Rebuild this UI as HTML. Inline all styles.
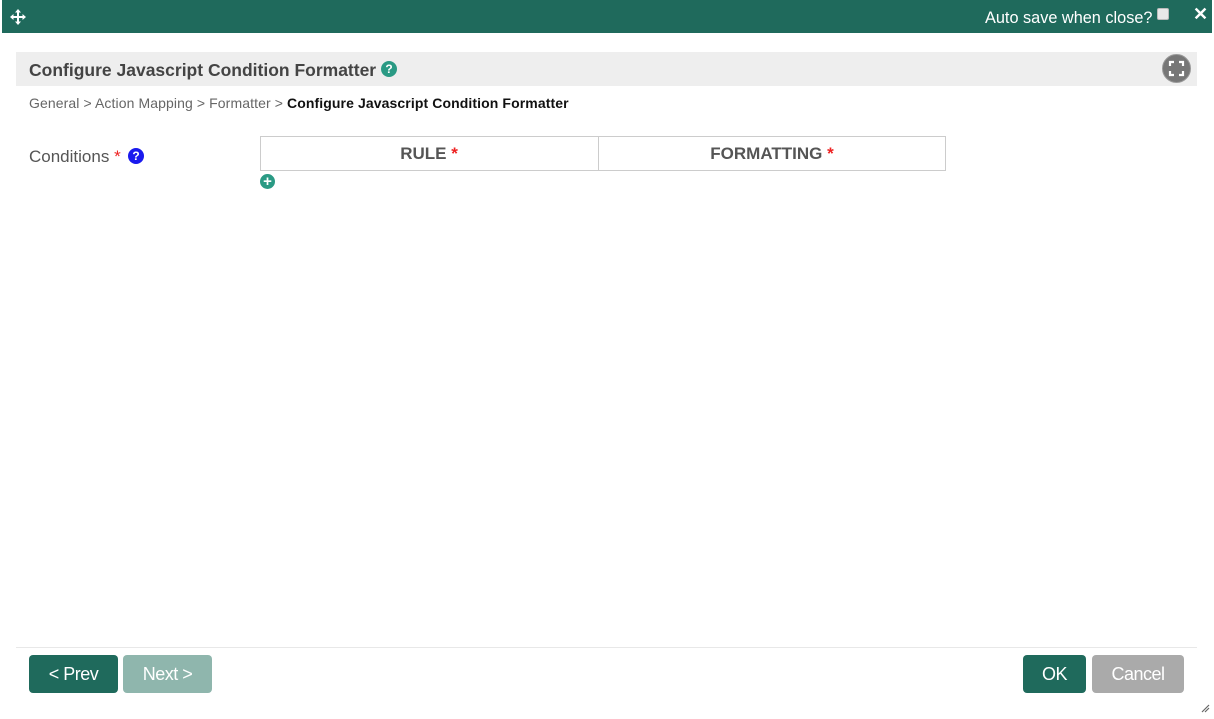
<!DOCTYPE html>
<html><head><meta charset="utf-8"><style>
*{box-sizing:border-box;margin:0;padding:0}
body{width:1214px;height:719px;background:#fff;font-family:"Liberation Sans",Arial,sans-serif;position:relative;overflow:hidden}
.top{position:absolute;left:2px;top:0;width:1210px;height:33px;background:#1f6a5c;color:#fff}
.abs{position:absolute}
.btn{position:absolute;top:655px;height:38px;border-radius:4px;color:#fff;font-size:18px;line-height:38px;text-align:center;letter-spacing:-0.5px}
</style></head><body>
<div class="top">
<svg class="abs" style="left:8px;top:9px" width="16" height="16" viewBox="0 0 16 16" fill="#fff"><path d="M8 0L11 3.5H9V7H12.5V5L16 8L12.5 11V9H9V12.5H11L8 16L5 12.5H7V9H3.5V11L0 8L3.5 5V7H7V3.5H5Z"/></svg>
<div class="abs" style="left:983px;top:9px;font-size:16.3px">Auto save when close?</div>
<div class="abs" style="left:1155px;top:8px;width:12px;height:12px;background:#e8e8e8;border:1px solid #bbb;border-radius:2px"></div>
<div class="abs" style="left:1191px;top:4px;font-size:18px;font-weight:bold">✕</div>
</div>
<div class="abs" style="left:16px;top:52px;width:1181px;height:34px;background:#eeeeee"></div>
<div class="abs" style="left:29px;top:60px;font-size:17.5px;font-weight:bold;color:#444">Configure Javascript Condition Formatter</div>
<div class="abs" style="left:381px;top:61px;width:16px;height:16px;border-radius:50%;background:#2a9a84;color:#fff;font-size:12px;font-weight:bold;text-align:center;line-height:16px">?</div>
<div class="abs" style="left:1162px;top:54px;width:29px;height:29px;border-radius:50%;background:#777;border:1px solid #999"></div>
<svg class="abs" style="left:1168px;top:60px" width="17" height="17" viewBox="0 0 17 17" fill="none" stroke="#fff" stroke-width="2.2"><path d="M2 6V2H6M11 2H15V6M15 11V15H11M6 15H2V11"/></svg>
<div class="abs" style="left:29px;top:95px;font-size:14px;color:#666;letter-spacing:0.1px">General &gt; Action Mapping &gt; Formatter &gt; <b style="color:#111">Configure Javascript Condition Formatter</b></div>
<div class="abs" style="left:29px;top:147px;font-size:17px;color:#555">Conditions <span style="color:#e22">*</span></div>
<div class="abs" style="left:128px;top:148px;width:16px;height:16px;border-radius:50%;background:#1a1aee;color:#fff;font-size:12px;font-weight:bold;text-align:center;line-height:16px">?</div>
<div class="abs" style="left:260px;top:136px;width:686px;height:35px;border:1px solid #ccc"></div>
<div class="abs" style="left:598px;top:136px;width:1px;height:35px;background:#ccc"></div>
<div class="abs" style="left:260px;top:144px;width:338px;text-align:center;font-size:17px;font-weight:bold;color:#555">RULE <span style="color:#e22">*</span></div>
<div class="abs" style="left:598px;top:144px;width:348px;text-align:center;font-size:17px;font-weight:bold;color:#555">FORMATTING <span style="color:#e22">*</span></div>
<div class="abs" style="left:260px;top:174px;width:15px;height:15px;border-radius:50%;background:#2a9a84;color:#fff;font-size:15px;font-weight:bold;text-align:center;line-height:15px">+</div>
<div class="abs" style="left:16px;top:647px;width:1181px;height:1px;background:#e8e8e8"></div>
<div class="btn" style="left:29px;width:89px;background:#1f6a5c">&lt; Prev</div>
<div class="btn" style="left:123px;width:89px;background:#8fb6ad">Next &gt;</div>
<div class="btn" style="left:1023px;width:63px;background:#1f6a5c">OK</div>
<div class="btn" style="left:1092px;width:92px;background:#aaa">Cancel</div>
<svg class="abs" style="left:1200px;top:703px" width="10" height="10" viewBox="0 0 10 10" stroke="#666" stroke-width="1.2"><path d="M9 2L2 9M9 5L5 9"/></svg>
</body></html>
